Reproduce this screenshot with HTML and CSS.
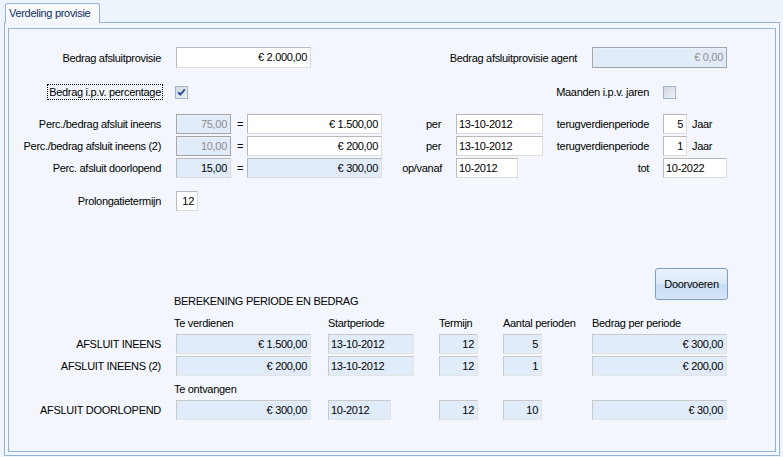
FILE: index.html
```html
<!DOCTYPE html>
<html>
<head>
<meta charset="utf-8">
<link rel="stylesheet" href="styles.css">
</head>
<body>
<div class="win">
  <div class="tabs"><div class="tab">Verdeling provisie</div></div>
  <div class="panel">
    <div class="group">
      <div class="row r1">
        <div class="lbl w167">Bedrag afsluitprovisie</div>
        <div class="field h21 w135 num">€ 2.000,00</div>
        <div class="lbl w281">Bedrag afsluitprovisie agent</div>
        <div class="field h21 ro dis w135 num">€ 0,00</div>
      </div>
      <div class="row r2">
        <div class="lbl w166 pr12"><span class="focus">Bedrag i.p.v. percentage</span></div>
        <div class="chk"><svg width="11" height="11" viewBox="0 0 11 11"><path d="M2.2 5.2 L4.4 7.6 L8.8 2.4" fill="none" stroke="#2b4f98" stroke-width="2"/></svg></div>
        <div class="lbl w475 pr14">Maanden i.p.v. jaren</div>
        <div class="chk"></div>
      </div>
      <div class="row r3">
        <div class="lbl w167">Perc./bedrag afsluit ineens</div>
        <div class="field ro dis w55 num">75,00</div>
        <div class="eq">=</div>
        <div class="field w135 num">€ 1.500,00</div>
        <div class="lbl w74">per</div>
        <div class="field w87">13-10-2012</div>
        <div class="lbl w120 pr14">terugverdienperiode</div>
        <div class="field w24 num">5</div>
        <div class="unit">Jaar</div>
      </div>
      <div class="row r4">
        <div class="lbl w167">Perc./bedrag afsluit ineens (2)</div>
        <div class="field ro dis w55 num">10,00</div>
        <div class="eq">=</div>
        <div class="field w135 num">€ 200,00</div>
        <div class="lbl w74">per</div>
        <div class="field w87">13-10-2012</div>
        <div class="lbl w120 pr14">terugverdienperiode</div>
        <div class="field w24 num">1</div>
        <div class="unit">Jaar</div>
      </div>
      <div class="row r4">
        <div class="lbl w167">Perc. afsluit doorlopend</div>
        <div class="field ro w55 num">15,00</div>
        <div class="eq">=</div>
        <div class="field ro w135 num">€ 300,00</div>
        <div class="lbl w74 pr14">op/vanaf</div>
        <div class="field w62">10-2012</div>
        <div class="lbl w145 pr14">tot</div>
        <div class="field w64">10-2022</div>
      </div>
      <div class="row r6">
        <div class="lbl w167">Prolongatietermijn</div>
        <div class="field w22 num">12</div>
      </div>
      <div class="actions">
        <div class="title">BEREKENING PERIODE EN BEDRAG</div>
        <button class="btn">Doorvoeren</button>
      </div>
      <div class="trow thead">
        <div></div>
        <div class="shift">Te verdienen</div>
        <div>Startperiode</div>
        <div>Termijn</div>
        <div>Aantal perioden</div>
        <div>Bedrag per periode</div>
      </div>
      <div class="trow tr1">
        <div class="lbl">AFSLUIT INEENS</div>
        <div class="field ro lite w135 num">€ 1.500,00</div>
        <div class="field ro lite w86">13-10-2012</div>
        <div class="field ro lite w39 num">12</div>
        <div class="field ro lite w39 num">5</div>
        <div class="field ro lite w135 num">€ 300,00</div>
      </div>
      <div class="trow tr2">
        <div class="lbl">AFSLUIT INEENS (2)</div>
        <div class="field ro lite w135 num">€ 200,00</div>
        <div class="field ro lite w86">13-10-2012</div>
        <div class="field ro lite w39 num">12</div>
        <div class="field ro lite w39 num">1</div>
        <div class="field ro lite w135 num">€ 200,00</div>
      </div>
      <div class="trow thead2">
        <div></div>
        <div class="shift">Te ontvangen</div>
      </div>
      <div class="trow tr3">
        <div class="lbl">AFSLUIT DOORLOPEND</div>
        <div class="field ro lite w135 num">€ 300,00</div>
        <div class="field ro lite w63">10-2012</div>
        <div class="field ro lite w39 num">12</div>
        <div class="field ro lite w39 num">10</div>
        <div class="field ro lite w135 num">€ 30,00</div>
      </div>
    </div>
  </div>
</div>
</body>
</html>
```
FILE: styles.css
```css
html, body {
  margin: 0;
  padding: 0;
}
body {
  background: #eef4fc;
  font-family: "Liberation Sans", Arial, sans-serif;
  font-size: 11px;
  letter-spacing: -0.3px;
  color: #000;
}
.win {
  width: 783px;
  height: 457px;
  overflow: hidden;
}
.tabs {
  height: 19px;
  padding: 3px 0 0 5px;
  display: flex;
  align-items: flex-start;
  position: relative;
  z-index: 1;
}
.tab {
  box-sizing: border-box;
  width: 95px;
  height: 20px;
  border: 1px solid #94b2da;
  border-bottom: 0;
  border-radius: 3px 3px 0 0;
  background: linear-gradient(#fbfdff, #f3f7fd);
  color: #0f2c5c;
  line-height: 18px;
  padding-left: 3px;
  white-space: nowrap;
}
.panel {
  box-sizing: border-box;
  margin-left: 4px;
  width: 776px;
  height: 434px;
  border: 1px solid #94b2da;
  padding: 5px 3px 3px 3px;
  background: #f3f7fd;
}
.group {
  box-sizing: border-box;
  height: 100%;
  border: 1px solid #94b2da;
  background: #f3f7fd;
}
.row {
  display: flex;
  align-items: center;
  height: 20px;
}
.r1 { margin-top: 18px; height: 21px; }
.r2 { margin-top: 16px; height: 16px; }
.r3 { margin-top: 14px; }
.r4 { margin-top: 2px; }
.r6 { margin-top: 13px; }

.lbl {
  box-sizing: border-box;
  text-align: right;
  padding-right: 15px;
  white-space: nowrap;
  flex: none;
}
.pr12 { padding-right: 12px; }
.pr14 { padding-right: 14px; }

.w22 { width: 22px; }
.w24 { width: 24px; }
.w39 { width: 39px; }
.w55 { width: 55px; }
.w62 { width: 62px; }
.w63 { width: 63px; }
.w64 { width: 64px; }
.w74 { width: 74px; }
.w86 { width: 86px; }
.w87 { width: 87px; }
.w120 { width: 120px; }
.w135 { width: 135px; }
.w145 { width: 145px; }
.w166 { width: 166px; }
.w167 { width: 167px; }
.w281 { width: 281px; }
.w475 { width: 475px; }

.field {
  box-sizing: border-box;
  flex: none;
  height: 20px;
  line-height: 18px;
  border: 1px solid;
  border-color: #b9b9b9 #dcdcdc #dcdcdc #b9b9b9;
  background: #fff;
  padding: 0 3px 0 2px;
  white-space: nowrap;
  overflow: hidden;
}
.field.h21 { height: 21px; line-height: 19px; }
.num { text-align: right; }
.field.ro { background: #e1ecfb; }
.field.dis {
  color: #8d8d8d;
  border-color: #a4a4a4;
  box-shadow: inset 1px 1px 0 #eef2f8;
}
.field.lite {
  border-color: #c9c9c9 #e4e4e4 #e4e4e4 #c9c9c9;
}
.eq {
  width: 16px;
  box-sizing: border-box;
  padding-left: 6px;
  flex: none;
}
.unit { padding-left: 5px; }

.focus {
  display: inline-block;
  border: 1px dotted #000;
  padding: 0 1px;
  line-height: 14px;
}
.chk {
  box-sizing: border-box;
  flex: none;
  width: 13px;
  height: 13px;
  border: 1px solid #9fb4cf;
  background: linear-gradient(135deg, #d3d9e2, #eef1f5);
  display: flex;
  align-items: center;
  justify-content: center;
}
.chk svg { display: block; }

.actions {
  margin-top: 57px;
  height: 40px;
  display: flex;
  align-items: flex-start;
}
.title {
  align-self: flex-end;
  margin-left: 165px;
  line-height: 14px;
  white-space: nowrap;
}
.btn {
  margin-left: auto;
  margin-right: 47px;
  width: 73px;
  height: 32px;
  box-sizing: border-box;
  border: 1px solid #7d9dca;
  border-radius: 3px;
  background: linear-gradient(#eaf2fc 0%, #dbe8f8 50%, #c9dcf3 51%, #d6e4f7 100%);
  font-family: "Liberation Sans", Arial, sans-serif;
  font-size: 11px;
  letter-spacing: -0.3px;
  color: #000;
  padding: 0;
}

.trow {
  display: grid;
  grid-template-columns: 167px 152px 111px 64px 89px 135px;
  align-items: center;
}
.thead { margin-top: 8px; line-height: 14px; }
.thead2 { margin-top: 6px; line-height: 14px; }
.shift { margin-left: -2px; }
.tr1 { margin-top: 4px; }
.tr2 { margin-top: 2px; }
.tr3 { margin-top: 4px; }
```
